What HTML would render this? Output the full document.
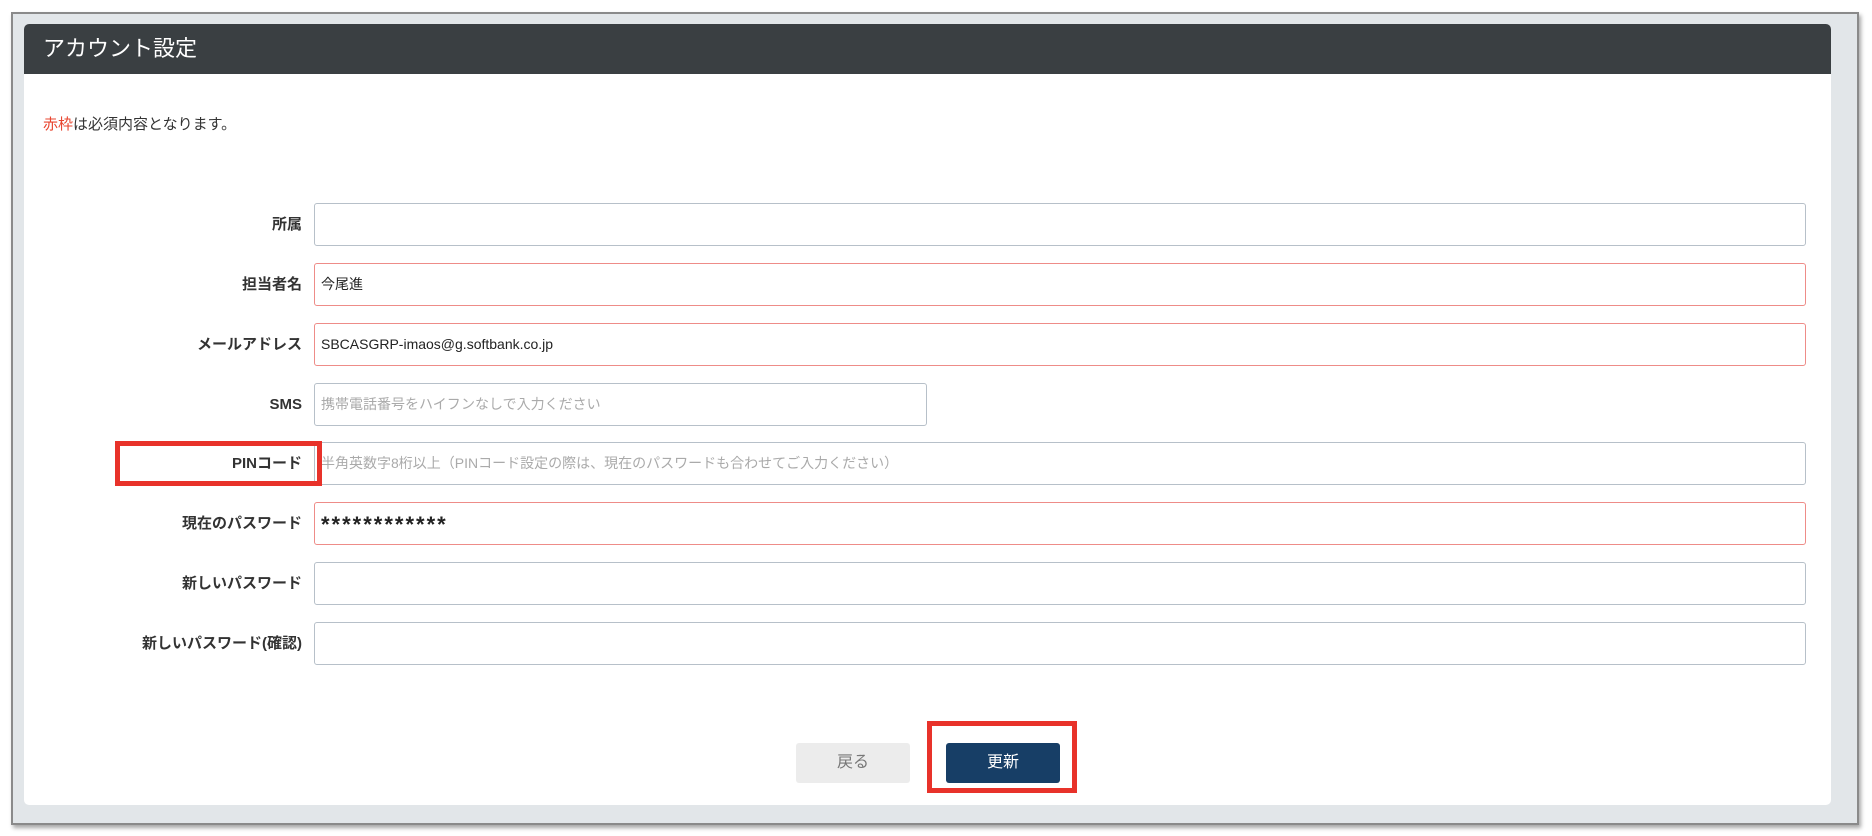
<!DOCTYPE html>
<html><head><meta charset="utf-8"><style>
*{box-sizing:border-box;margin:0;padding:0}
body{width:1872px;height:836px;background:#fff;font-family:"Liberation Sans","Noto Sans CJK JP",sans-serif;position:relative;overflow:hidden}
.frame{position:absolute;left:11px;top:12px;width:1848px;height:813px;background:#e2e6e9;border:2px solid #8a8a8a;box-shadow:2px 3px 4px rgba(0,0,0,.35)}
.panel{position:absolute;left:24px;top:24px;width:1807px;height:781px;background:#fff;border-radius:5px;overflow:hidden}
.hd{height:50px;background:#3a3f42;color:#fff;font-size:22px;line-height:50px;padding-left:19px}
.note{position:absolute;left:19px;top:89px;font-size:15px;color:#333}
.note span{color:#e8452f}
.row{position:absolute;left:0;height:43px;width:1807px}
.lbl{position:absolute;right:1529px;top:0;line-height:43px;font-size:15px;font-weight:bold;color:#333;white-space:nowrap}
.in{position:absolute;left:290px;top:0;width:1492px;height:43px;border:1px solid #b7c0c9;border-radius:3px;font-size:14px;line-height:41px;padding-left:6px;color:#222}
.req{border-color:#ee8c88}
.ph{color:#aaa}
.btn{position:absolute;top:719px;height:40px;width:114px;border-radius:3px;font-size:16px;text-align:center;line-height:40px}
.redbox{position:absolute;border:5px solid #e8322a}
</style></head><body>
<div class="frame"></div>
<div class="panel">
<div class="hd">アカウント設定</div>
<div class="note"><span>赤枠</span>は必須内容となります。</div>
<div class="row" style="top:179px"><div class="lbl">所属</div><div class="in"></div></div>
<div class="row" style="top:239px"><div class="lbl">担当者名</div><div class="in req">今尾進</div></div>
<div class="row" style="top:299px"><div class="lbl">メールアドレス</div><div class="in req">SBCASGRP-imaos@g.softbank.co.jp</div></div>
<div class="row" style="top:359px"><div class="lbl">SMS</div><div class="in ph" style="width:613px">携帯電話番号をハイフンなしで入力ください</div></div>
<div class="row" style="top:418px"><div class="lbl">PINコード</div><div class="in ph">半角英数字8桁以上（PINコード設定の際は、現在のパスワードも合わせてご入力ください）</div></div>
<div class="row" style="top:478px"><div class="lbl">現在のパスワード</div><div class="in req" style="font-size:22px;font-weight:bold;letter-spacing:2px;line-height:44px">************</div></div>
<div class="row" style="top:538px"><div class="lbl">新しいパスワード</div><div class="in"></div></div>
<div class="row" style="top:598px"><div class="lbl">新しいパスワード(確認)</div><div class="in"></div></div>
<div class="btn" style="left:772px;background:#ececec;color:#777">戻る</div>
<div class="btn" style="left:922px;background:#173e66;color:#fff">更新</div>
</div>
<div class="redbox" style="left:115px;top:441px;width:207px;height:45px"></div>
<div class="redbox" style="left:927px;top:721px;width:150px;height:72px"></div>
</body></html>
